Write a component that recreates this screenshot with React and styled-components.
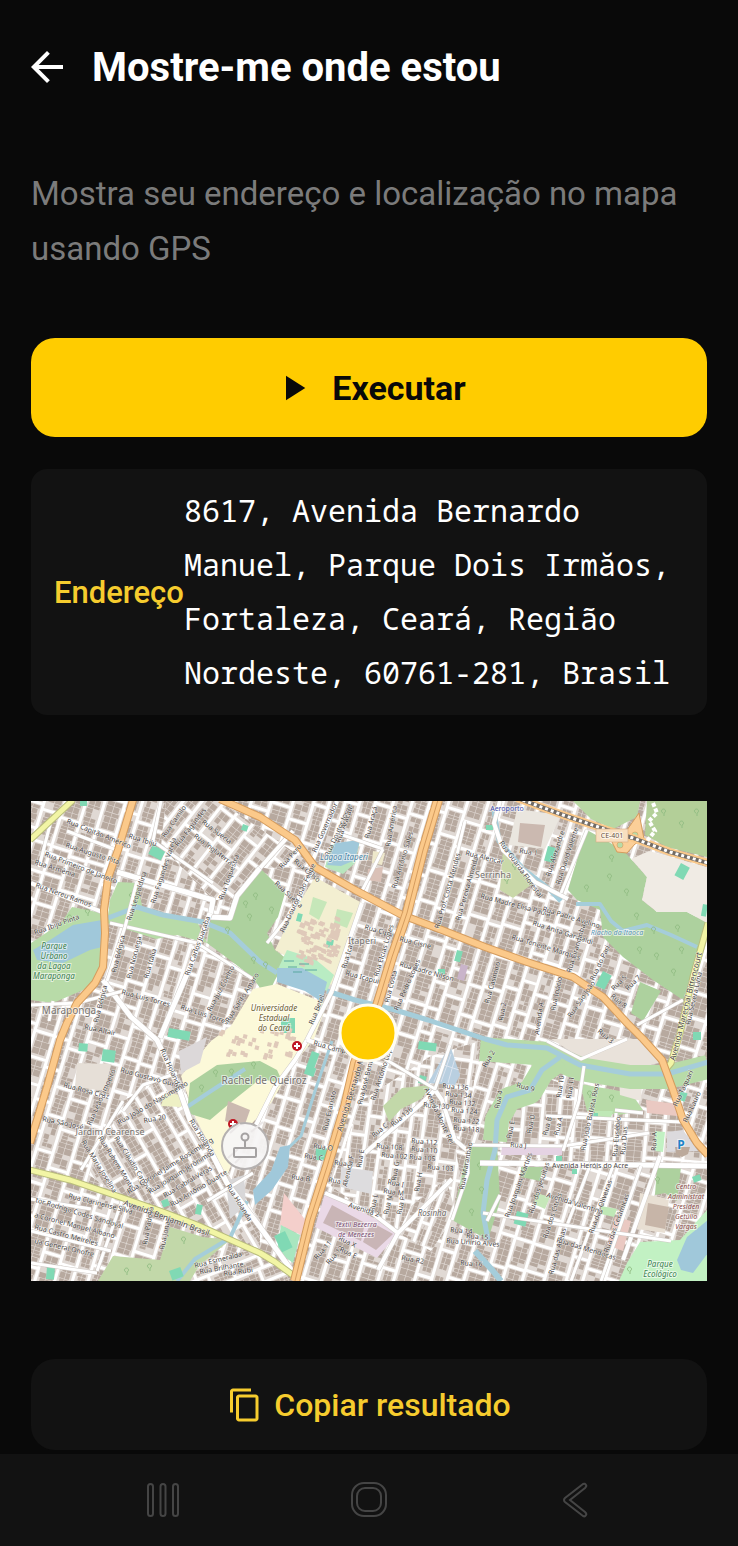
import styled, { createGlobalStyle } from 'styled-components';
import { MdArrowBack, MdContentCopy, MdPlayArrow } from 'react-icons/md';

const ADDRESS =
  '8617, Avenida Bernardo Manuel, Parque Dois Irmăos, Fortaleza, Ceará, Região Nordeste, 60761-281, Brasil';

export default function App() {
  return (
    <>
      <GlobalStyle />
      <Screen>
        <Header>
          <BackButton type="button" aria-label="Voltar">
            <MdArrowBack />
          </BackButton>
          <Title>Mostre-me onde estou</Title>
        </Header>

        <Content>
          <Description>Mostra seu endereço e localização no mapa usando GPS</Description>

          <RunButton type="button">
            <MdPlayArrow />
            Executar
          </RunButton>

          <ResultCard>
            <dt>Endereço</dt>
            <dd>{ADDRESS}</dd>
          </ResultCard>

          <MapFrame>
            <CityMap />
          </MapFrame>

          <CopyButton type="button">
            <MdContentCopy />
            Copiar resultado
          </CopyButton>
        </Content>

        <SystemBar>
          <SystemButton type="button" aria-label="Recentes">
            <svg width="36" height="36" viewBox="0 0 36 36">
              <rect x="3" y="2" width="5" height="32" rx="2.5" />
              <rect x="15.5" y="2" width="5" height="32" rx="2.5" />
              <rect x="28" y="2" width="5" height="32" rx="2.5" />
            </svg>
          </SystemButton>
          <SystemButton type="button" aria-label="Início">
            <svg width="36" height="36" viewBox="0 0 36 36">
              <rect x="1" y="1" width="34" height="33" rx="12" />
              <rect x="6" y="6" width="24" height="23" rx="8" />
            </svg>
          </SystemButton>
          <SystemButton type="button" aria-label="Voltar ao anterior">
            <svg width="36" height="36" viewBox="0 0 36 36">
              <path d="M26 2 L8 16 Q6 18 8 20 L26 34 Q28 35 29 33 Q30 32 28 30 L13 18 L28 6 Q30 4 29 3 Q28 1 26 2Z" />
            </svg>
          </SystemButton>
        </SystemBar>
      </Screen>
    </>
  );
}

function CityMap() {
  return (
    <MapSvg viewBox="0 0 676 480" role="img" aria-label="Mapa">
      <defs>
        {districts.map((district) => (
          <clipPath id={district.id} key={district.id}>
            <polygon points={district.area} />
          </clipPath>
        ))}
      </defs>

      <rect width="676" height="480" fill="#e3deda" />
      {districts.map((district) => (
        <District key={district.id} {...district} />
      ))}

      {landuse.map(([fill, points]) => (
        <polygon key={points} points={points} fill={fill} />
      ))}
      {riverBanks.map((d) => (
        <path key={d} d={d} fill="none" stroke="#b8dba8" strokeWidth="24" strokeLinejoin="round" />
      ))}
      {streams.map(([d, width]) => (
        <path key={d} d={d} fill="none" stroke="#a5cdda" strokeWidth={width} strokeLinejoin="round" />
      ))}
      {lakes.map((points) => (
        <polygon key={points} points={points} fill="#a0c8da" />
      ))}
      {pitches.map(([x, y, width, height, angle]) => (
        <rect
          key={`${x}-${y}`}
          x={x}
          y={y}
          width={width}
          height={height}
          fill="#80d9b4"
          transform={`rotate(${angle} ${x} ${y})`}
        />
      ))}
      <path d={trees} fill="none" stroke="#91bd83" strokeWidth="1" />
      <path d={campus} fill="#dfc9b9" />
      <path d="M253 160h10m5 3h10m-21 3h9m8 3h12m-24 2h9" stroke="#58a7a0" strokeWidth="1" />
      <path d="M416 250l-13 31m17-28l-10 28m14-24l-7 25m-10-20l21 7" stroke="#dbe4ef" strokeWidth="1" />

      {streets.map(([d, width]) => (
        <g key={d} fill="none" strokeLinejoin="round">
          <path d={d} stroke="#cfcac6" strokeWidth={width + 1} />
          <path d={d} stroke="#fff" strokeWidth={width} />
        </g>
      ))}
      {yellowRoads.map((d) => (
        <Road key={d} d={d} edge="#b9bd7c" fill="#f2f5a5" width="7" />
      ))}
      <polygon points="608,12 613,38 604,43 596,52 586,51 581,41 596,29" fill="#fbcf98" stroke="#d59c5e" />
      <circle cx="604" cy="34" r="3" fill="#b8dba8" stroke="#d59c5e" strokeWidth=".6" />
      <circle cx="589" cy="44" r="3" fill="#b8dba8" stroke="#d59c5e" strokeWidth=".6" />
      {orangeRoads.map(([d, width]) => (
        <Road key={d} d={d} edge="#d59c5e" fill="#fbc98a" width={width} />
      ))}
      <path d={centralAvenue} fill="none" stroke="#d59c5e" strokeWidth="1" />
      <g fill="none">
        <path d={railway} stroke="#fbc98a" strokeWidth="8" />
        <path d={railway} stroke="#716b66" strokeWidth="4" />
        <path d={railway} stroke="#fff" strokeWidth="3" strokeDasharray="3 3" />
      </g>
      <path d={runway} fill="none" stroke="#fff" strokeWidth="4" strokeDasharray="4 2" />

      {streetLabels.map(([text, x, y, angle, size = 7]) => (
        <StreetLabel key={`${text}-${x}-${y}`} fontSize={size} transform={`translate(${x} ${y}) rotate(${angle})`}>
          {text}
        </StreetLabel>
      ))}
      {placeLabels.map(({ lines, x, y, color, size, italic }) => (
        <PlaceLabel key={lines.join(' ')} fill={color} fontSize={size} $italic={italic}>
          {lines.map((line, index) => (
            <tspan key={line} x={x} y={y + index * 10}>
              {line}
            </tspan>
          ))}
        </PlaceLabel>
      ))}

      <rect x="565" y="28" width="32" height="13" fill="#f8dfbf" stroke="#d8ac83" strokeWidth=".6" />
      <PlaceLabel x="581" y="37" fill="#6b5342" fontSize="7">
        CE-401
      </PlaceLabel>
      <PlaceLabel x="650" y="348" fill="#1e84c9" fontSize="12" $bold>
        P
      </PlaceLabel>

      <Hospital x={266} y={245} />
      <Hospital x={202} y={323} />

      <circle cx="214" cy="345" r="23" fill="#f7f5f5" fillOpacity=".94" stroke="#b5b1b0" strokeWidth="2" />
      <g fill="none" stroke="#a5a2a2" strokeWidth="2">
        <path d="M197 357l10-9m-3 14l6-6m10-25l12-10m-33 11l10-9" stroke="#ebe8e8" />
        <circle cx="214" cy="336" r="3.5" />
        <path d="M214 340v7" />
        <rect x="203" y="347" width="22" height="9" rx="1" />
      </g>

      <circle cx="337" cy="232" r="28" fill="#ffcc00" stroke="#fffdf0" strokeWidth="3" />
    </MapSvg>
  );
}

function District({ id, blocks, houses }) {
  return (
    <g clipPath={`url(#${id})`}>
      <rect width="676" height="480" fill="#fff" />
      <path d={blocks} fill="#e0d9d4" />
      <path d={houses} fill="#b7a99f" />
    </g>
  );
}

function Road({ d, edge, fill, width }) {
  return (
    <g fill="none" strokeLinejoin="round">
      <path d={d} stroke={edge} strokeWidth={width} />
      <path d={d} stroke={fill} strokeWidth={width - 2} />
    </g>
  );
}

function Hospital({ x, y }) {
  return (
    <g>
      <circle cx={x} cy={y} r="5" fill="#bf1722" />
      <path d={`M${x - 3} ${y}h6M${x} ${y - 3}v6`} stroke="#fff" strokeWidth="2" />
    </g>
  );
}

function createRandom(seed) {
  let state = seed;
  return () => {
    state = (state * 16807) % 2147483647;
    return state / 2147483647;
  };
}

// Fills a rotated square around (cx, cy) with city blocks lined with houses
function createDistrict(id, area, { cx, cy, reach, angle, block, depth, seed }) {
  const random = createRandom(seed);
  const radians = (angle * Math.PI) / 180;
  const cos = Math.cos(radians);
  const sin = Math.sin(radians);
  const blocks = [];
  const houses = [];

  const quad = (u, v, w, h) =>
    'M' +
    [
      [u, v],
      [u + w, v],
      [u + w, v + h],
      [u, v + h],
    ]
      .map(([a, b]) => `${(cx + a * cos - b * sin).toFixed(1)} ${(cy + a * sin + b * cos).toFixed(1)}`)
      .join('L') +
    'Z';

  let u = -reach;
  while (u < reach) {
    const width = block + Math.round(random() * 7);
    let v = -reach - random() * 20;
    while (v < reach) {
      const height = depth + Math.round(random() * depth * 0.7);
      blocks.push(quad(u, v, width, height));
      const cell = (width - 1) / 2;
      let offset = 1;
      while (offset < height - 3) {
        const step = 3 + random() * 4;
        for (let side = 0; side < 2; side++) {
          if (random() > 0.1) {
            const inset = random() * 2;
            houses.push(
              quad(u + 1 + side * cell + (side ? 0 : inset), v + offset, cell - inset - 0.6, Math.min(step - 0.6, height - offset - 1))
            );
          }
        }
        offset += step;
      }
      v += height + 3;
    }
    u += width + 3;
  }

  return { id, area, blocks: blocks.join(''), houses: houses.join('') };
}

const districts = [
  createDistrict('city', '0,0 676,0 676,480 0,480', {
    cx: 338, cy: 240, reach: 430, angle: 17, block: 11, depth: 22, seed: 41,
  }),
  createDistrict('north', '135,0 189,0 284,66 229,67 206,99 182,99 130,45', {
    cx: 190, cy: 50, reach: 90, angle: 38, block: 11, depth: 24, seed: 7,
  }),
  createDistrict('jardim', '92,300 146,272 179,345 229,419 229,452 92,397 58,374', {
    cx: 140, cy: 360, reach: 120, angle: -30, block: 9, depth: 28, seed: 19,
  }),
  createDistrict('centre', '330,300 400,255 449,240 440,300 425,350 435,410 367,432 300,385', {
    cx: 370, cy: 340, reach: 110, angle: 8, block: 10, depth: 20, seed: 23,
  }),
  createDistrict('rosinha', '380,405 415,378 425,412 400,450 367,432', {
    cx: 398, cy: 415, reach: 45, angle: 20, block: 6, depth: 50, seed: 31,
  }),
  createDistrict('east', '472,300 512,276 606,309 645,312 677,362 520,360 452,345', {
    cx: 560, cy: 325, reach: 120, angle: 5, block: 12, depth: 26, seed: 55,
  }),
  createDistrict('south', '150,480 170,460 225,448 270,480', {
    cx: 210, cy: 465, reach: 70, angle: 68, block: 8, depth: 22, seed: 3,
  }),
];

const landuse = [
  ['#b8dba8', '41,106 71,112 71,166 59,186 22,202 0,199 0,142 30,122'],
  ['#b8dba8', '87,81 106,82 112,109 132,116 166,120 176,142 146,134 125,138 76,122 79,99'],
  ['#add19e', '229,67 254,92 247,116 236,132 244,149 256,158 244,179 236,196 221,176 199,159 176,142 180,117 199,117 206,95'],
  ['#fcf9d9', '222,188 246,183 296,203 283,238 262,264 240,302 212,332 196,375 179,345 165,318 150,275 180,240 200,225'],
  ['#f3efd1', '284,76 331,102 314,146 303,186 284,172 244,149 262,112'],
  ['#b9ecc3', '256,149 284,158 303,174 296,190 246,170'],
  ['#c6e7b9', '282,96 296,101 288,119 278,113'],
  ['#c6e7b9', '306,108 322,112 316,127 303,122'],
  ['#b8e5bd', '300,44 329,39 324,62 312,73 294,66'],
  ['#add19e', '159,282 186,264 229,260 246,269 252,282 229,278 199,302 179,319 156,312'],
  ['#add19e', '556,29 592,49 616,76 611,99 626,111 656,111 677,122 666,162 652,199 622,179 592,156 572,136 569,109 546,99 537,89 546,59'],
  ['#b8d7a3', '542,0 609,0 606,16 582,28 560,18'],
  ['#b3cf98', '616,0 676,0 676,56 636,46 614,34'],
  ['#f0ebe4', '600,58 618,50 676,66 676,122 656,111 626,111 611,99 616,76'],
  ['#eae6df', '486,8 530,14 514,48 478,44'],
  ['#c9d8a9', '472,49 504,81 482,97 469,89'],
  ['#c2d8a9', '67,480 82,455 129,459 139,426 172,436 199,439 168,465 159,480'],
  ['#d8d7d8', '195,380 213,374 215,404 199,418'],
  ['#dcd8d9', '148,250 176,236 169,262 150,272'],
  ['#e6dfd7', '46,262 80,263 74,290 44,286'],
  ['#eef0c5', '134,292 152,294 150,306 130,305'],
  ['#add19e', '437,346 466,342 469,400 457,439 421,419'],
  ['#b8dba8', '549,283 600,292 612,309 588,314 556,310'],
  ['#ece6df', '588,278 611,282 610,300 589,294'],
  ['#e9e2da', '520,238 612,238 628,262 592,270 552,258'],
  ['#c2d8a9', '352,305 371,287 401,284 390,298 370,308 358,321'],
  ['#dddcde', '310,366 342,370 340,393 310,386'],
  ['#ead9e7', '294,392 341,416 367,432 346,457 284,426'],
  ['#c9b5b6', '301,404 334,422 330,440 292,422'],
  ['#c9b5b6', '340,421 362,433 345,449 332,441'],
  ['#f4cfcb', '253,392 276,421 270,434 249,424'],
  ['#a9e6bf', '250,424 269,434 262,462 246,450'],
  ['#b9cfe0', '419,244 429,274 424,284 397,282'],
  ['#e5d3e3', '471,346 532,346 531,354 470,354'],
  ['#add19e', '490,366 512,366 509,380 490,376'],
  ['#add19e', '626,366 650,366 646,400 634,392 624,394'],
  ['#e8dfd3', '609,392 638,398 634,432 606,428'],
  ['#c7b5a8', '617,402 638,406 634,428 614,424'],
  ['#eac9c2', '584,416 600,420 592,450 576,444'],
  ['#eac9c2', '615,299 646,303 646,315 616,312'],
  ['#c2f1c3', '596,462 609,441 649,439 677,408 677,480 588,480'],
  ['#c2f1c3', '624,330 634,331 632,351 624,350'],
  ['#dcdadd', '636,331 652,329 667,350 636,351'],
  ['#bba99b', '644,346 659,346 657,353 651,356 645,353'],
  ['#bfe8b6', '564,310 582,310 580,317 563,317'],
  ['#c6e7b9', '505,392 519,396 514,408 503,403'],
  ['#bfe8b6', '570,405 586,408 583,416 570,413'],
  ['#add19e', '609,181 630,190 612,220 600,212'],
  ['#cbb9b0', '489,22 514,24 510,46 487,41'],
  ['#dac1b7', '337,68 352,66 350,81 336,79'],
  ['#eee8cb', '342,50 354,52 351,64 341,62'],
  ['#cbb9b0', '197,300 219,309 213,326 194,320'],
  ['#c9b4ca', '430,163 437,165 433,180 426,178'],
];

const lakes = [
  '71,119 42,124 19,139 2,149 6,159 32,162 59,149 71,146',
  '246,167 271,167 296,181 291,201 274,190 246,181',
  '304,42 329,39 324,59 310,65 296,64',
  '249,346 259,344 257,366 241,389 224,404 222,389 240,370',
  '677,419 656,436 646,459 650,469 662,472 677,452',
];

const riverBanks = [
  'M449 248 L476 250 516 253 549 268 599 276 636 276 677 266',
  'M529 258 L511 271 499 291 478 298 466 319 464 340',
];

const streams = [
  ['M77 117 L106 106 132 114 172 121 199 132 229 161 246 172', 5],
  ['M296 190 L324 199 364 209 397 219 454 238 476 244 516 247 549 264 599 273 636 273 677 261', 5],
  ['M529 256 L511 269 499 289 476 296 466 319 464 349 456 379 452 412 457 439', 5],
  ['M146 480 L164 458 199 437 216 400', 4],
  ['M301 240 L284 290 270 335 256 348', 3],
  ['M156 306 L180 290 214 268', 4],
  ['M545 103 L569 103 580 120 592 130 616 124 640 134 666 146', 4],
  ['M444 450 L462 470 470 480', 6],
  ['M463 10 L468 40 492 68 518 88 530 100', 5],
];

// x, y, width, height, angle
const pitches = [
  [122, 44, 14, 10, 28], [49, 0, 7, 5, 0], [212, 23, 6, 6, 20],
  [48, 242, 9, 8, 5], [72, 248, 13, 12, 8], [130, 400, 7, 7, -20],
  [166, 403, 6, 10, 12], [16, 466, 8, 12, 5], [138, 470, 12, 10, -20],
  [250, 217, 14, 15, 0], [281, 250, 8, 16, 20], [276, 264, 10, 9, 20],
  [285, 347, 11, 12, 3], [254, 430, 18, 12, 65], [388, 240, 18, 8, 8],
  [389, 274, 7, 8, 15], [517, 45, 9, 15, 15], [455, 24, 7, 5, 0],
  [650, 62, 10, 14, 28], [672, 103, 5, 12, 10], [572, 170, 10, 16, 28],
  [426, 149, 6, 11, 15], [407, 168, 7, 5, 0], [486, 410, 12, 13, 15],
  [525, 355, 6, 9, 0], [541, 368, 5, 5, 0], [650, 290, 7, 9, 20],
  [661, 376, 8, 6, -20], [138, 227, 22, 9, 10], [562, 312, 5, 5, 0],
  [662, 231, 8, 8, 0], [296, 138, 7, 8, 10], [267, 112, 5, 8, 15],
];

const trees = [
  [580, 58], [555, 88], [578, 77], [595, 92], [605, 116], [622, 130], [646, 128], [608, 150],
  [625, 156], [650, 150], [642, 172], [224, 96], [218, 117], [196, 130], [222, 160], [234, 165],
  [214, 104], [240, 110], [170, 288], [184, 273], [200, 272], [222, 265], [118, 467], [95, 471],
  [152, 440], [448, 366], [450, 390], [440, 412], [632, 12], [650, 24], [665, 12], [558, 294],
  [580, 298], [475, 80], [483, 66], [598, 470], [38, 118], [56, 112], [100, 96], [626, 380],
]
  .map(([x, y]) => `M${x} ${y}a2 2 0 1 1 1 0v3`)
  .join('');

// Scattered university buildings
const campus = (() => {
  const random = createRandom(97);
  const parts = [];
  for (let i = 0; i < 90; i++) {
    const x = 266 + random() * 40;
    const y = 118 + random() * 46 - (x - 266) * 0.1;
    parts.push(`M${x.toFixed(1)} ${y.toFixed(1)}l5 2-1 3-5-2z`);
  }
  for (let i = 0; i < 36; i++) {
    const x = 186 + random() * 76;
    const y = 226 + random() * 28;
    parts.push(`M${x.toFixed(1)} ${y.toFixed(1)}l4 1-1 4-4-1z`);
  }
  return parts.join('');
})();

const streets = [
  ['M86 71 L182 99 179 116 199 117 206 95 229 67', 5],
  ['M179 112 L159 166 142 206 129 237', 5],
  ['M12 50 L77 77', 4],
  ['M0 82 L71 111', 4],
  ['M20 20 L8 66 M36 30 L88 50', 3],
  ['M79 122 L166 142 222 178', 3],
  ['M72 179 L100 216 126 239 146 282 159 319 179 349 196 382 229 426 264 474', 5],
  ['M106 80 L94 126 76 180', 3],
  ['M0 204 L46 202 92 190 M22 200 L18 220', 3],
  ['M130 0 L122 40 182 82', 3],
  ['M229 67 L262 30 M279 66 L306 0', 4],
  ['M284 66 L254 120 236 142', 3],
  ['M276 239 L264 259 244 286 224 326', 4],
  ['M276 239 L307 249 M301 190 L276 239 M331 102 L301 190', 4],
  ['M306 32 L352 48 M352 48 L330 92', 3],
  ['M294 392 L341 412 367 432 347 469 M367 432 L421 378', 4],
  ['M334 352 L391 302 404 289 411 299 424 339 437 350', 4],
  ['M354 258 L404 288 419 244', 3],
  ['M437 346 L437 372 421 419', 3],
  ['M449 362 L676 365', 5],
  ['M440 344 L532 345 618 332', 3],
  ['M629 355 L592 459', 4],
  ['M560 362 L530 440 M582 365 L540 480 M610 365 L570 480', 3],
  ['M515 315 L651 321 M584 309 L612 312 M585 312 L583 360', 3],
  ['M553 265 L548 300 532 350', 3],
  ['M452 412 L640 440', 3],
  ['M469 394 L456 420', 3],
  ['M92 300 L50 369 M92 340 L110 380', 3],
  ['M92 397 L66 470 M96 400 L72 390', 3],
  ['M146 272 L112 284 92 310', 3],
  ['M222 372 L176 400', 3],
  ['M469 0 L463 22 472 49 504 81 537 98', 4],
  ['M556 29 L530 92', 3],
  ['M596 238 L550 258 516 240', 3],
  ['M652 199 L606 224', 3],
  ['M0 398 L60 408 M0 430 L80 450 M0 462 L66 472', 3],
  ['M412 112 L434 20', 3],
];

const yellowRoads = [
  'M-1 369 L39 379 92 397 132 411 166 424 229 452 244 461 263 475',
  'M42 -1 L-1 39',
  'M677 122 L662 176 649 232 640 262 635 268',
];

const centralAvenue = 'M407 -1 L392 49 376 112 361 156 347 202 324 262 314 306 296 366 279 419 264 480';

const orangeRoads = [
  ['M102 -1 L87 49 77 77 73 109 74 132 72 166 64 182 46 202 36 222 29 239 16 286 -1 342', 8],
  ['M189 -2 L229 16 264 39 284 66 324 89 371 114 411 129 454 146 496 161 542 176 572 196 596 222 612 238 631 259 642 289 652 319 666 342 677 354', 8],
  [centralAvenue, 10],
];

const railway = 'M486 -3 L532 14 576 29 602 37 639 51 677 62';
const runway = 'M622 2 L626 12 618 20 624 30 616 40';

// text, x, y, angle, size
const streetLabels = [
  ['Rua Primeiro de Janeiro', 13, 55, 21], ['Rua Capitão Américo', 35, 22, 22],
  ['Rua Augusto Pita', 34, 46, 18], ['Rua Armênia', 3, 63, 18],
  ['Rua Nereu Ramos', 4, 86, 20], ['Rua Ibijú', 97, 37, 17],
  ['Rua Fagundes Varela', 124, 103, -72], ['Rua Camilo', 134, 37, -55],
  ['Rua Fagundes', 147, 46, -52], ['Rua Suécia', 170, 22, 37],
  ['Rua Inglaterra', 162, 36, 37], ['Rua Leopoldina', 100, 120, -72],
  ['Rua Toquestra', 192, 99, -70], ['Rua Carlos Juaçaba', 158, 175, -70],
  ['Rua Bélgica', 85, 172, -76], ['Rua Noruega', 100, 178, -76],
  ['Rua Itália', 117, 178, -74], ['Rua Luis Torres', 90, 193, 15],
  ['Rua Luis Torres', 149, 208, 18], ['Rua Santo Amaro', 198, 222, -58],
  ['Rua Juiz Coelho', 180, 211, -62], ['Rua Bélgica', 67, 222, -76],
  ['Rua Ibijú Pinta', 4, 134, -20], ['Rua Altair', 53, 228, 12],
  ['Rua Rosa Cruz', 32, 286, 15], ['Rua São José', 11, 320, 12],
  ['Rua Gustavo Gurgel', 89, 271, 15], ['Rua Holanda', 129, 249, 66],
  ['Rua Leão Limoeiro', 60, 325, -66], ['Rua Holanda', 158, 320, 58],
  ['Rua Holanda', 195, 385, 58], ['Rua 20', 113, 322, -10],
  ['Rua João do Nascimento', 88, 324, -30], ['Rua Cláudio Canova', 83, 337, 58],
  ['Rua Rubem Monte', 67, 337, 58], ['Rua Maria Joselina', 50, 341, 58],
  ['Rua Coronel Jaime Rosemberg', 98, 393, -32], ['Rua Joaquim Jerônimo', 119, 393, -32],
  ['Rua Cabral Veras', 134, 397, -31], ['Rua Antônio Duarte', 141, 406, -31],
  ['Rua Clarinense Silva', 37, 397, 14], ['tor Rodrigo Codes Sandoval', 4, 401, 17],
  ['a Coronel Manuel Albano', 3, 416, 15], ['Rua Castro Meireles', 3, 428, 15],
  ['ua General Onofre', 3, 442, 13], ['Rua Padova', 116, 444, -80],
  ['Rua Jonas', 133, 449, -78], ['Rua Esmeralda', 164, 467, -14],
  ['Rua Brilhante', 169, 473, -10], ['Rua Rubi', 193, 475, -8],
  ['Avenida Benjamin Brasil', 92, 404, 20, 8],
  ['Rua Governador', 285, 52, -66], ['Rua Doutor Jorge', 298, 56, -66],
  ['Rua Aracati', 309, 42, -70], ['Rua Araçá', 338, 38, -75],
  ['Rua Antônio Sales', 365, 88, -73], ['Rua América', 359, 46, -80],
  ['Rua Peru', 251, 68, -48], ['Rua Celso', 262, 61, 40],
  ['Rua Suécia', 243, 83, 43], ['Rua Doutor João Felipe', 253, 132, -65],
  ['Rua Cipó', 333, 128, 16], ['Rua Cisne', 368, 140, 14],
  ['Rua Icaraí', 315, 168, -74], ['Rua Icapuí', 314, 174, 15],
  ['Rua Elcias Lopes', 347, 176, -73], ['Rua Padre Nilson', 368, 165, 16],
  ['Rua Pedro Lopes', 367, 210, -66], ['Rua Costa', 358, 202, -76],
  ['Rua Prof. Costa Mendes', 408, 128, -74], ['Rua Pereira Almeida', 429, 120, -74],
  ['Rua Alencar', 434, 54, 14], ['Rua Betel', 282, 224, -68],
  ['Rua 1', 488, 52, 8], ['Rua Guarda Florestal', 468, 42, 54],
  ['Rua Alexandre', 519, 76, -72], ['Rua David Valente', 529, 84, -72],
  ['Rua Madre Elisa Paula', 449, 97, 15], ['Rua Padre Avelino', 511, 110, 17],
  ['Rua Anita Garibaldi', 501, 124, 18], ['Rua Tenente Marques', 480, 138, 17],
  ['Rua Cirandinha', 540, 172, -73], ['Rua do Pari', 563, 180, -65],
  ['Rua Casimiro', 458, 203, -75], ['Rua Inácio', 524, 210, -78],
  ['Rua São João', 540, 217, -55], ['Avenida A', 508, 234, -82],
  ['Rua 2', 472, 220, -80], ['Rua 3', 566, 231, 40],
  ['Rua 5', 583, 190, -45], ['Rua 7', 597, 190, -45], ['Rua 8', 579, 196, 38],
  ['Avenida Marechal Bittencourt', 644, 260, -76, 8], ['Rua Severa Lima', 659, 224, -77],
  ['Avenida Bernardo Manuel', 311, 331, -73, 8], ['Rua Campo', 282, 244, 15],
  ['Rua Evaristo', 296, 330, -77], ['Rua O', 282, 347, 8], ['Rua C', 273, 357, 8],
  ['Rua B', 260, 378, 8], ['Rua A', 303, 364, 5], ['Rua D', 297, 381, 10],
  ['Rua José Bento', 331, 304, -76], ['Rua Antônio Lopes', 344, 300, -72],
  ['Rua C', 343, 337, -40], ['Rua 136', 362, 326, -40], ['Avenida Monte Rei', 393, 288, 65],
  ['Rua 136', 411, 287, 5], ['Rua 134', 414, 295, 5], ['Rua 132', 418, 303, 5],
  ['Rua 124', 420, 311, 5], ['Rua 122', 422, 321, 5], ['Rua 118', 422, 329, 5],
  ['Rua 130', 392, 306, 5], ['Rua 112', 380, 342, 5], ['Rua 108', 345, 347, 5],
  ['Rua 110', 380, 350, 5], ['Rua 105', 378, 358, 5], ['Rua 102', 350, 356, 5],
  ['Rua 103', 396, 368, 5], ['Avenida F', 316, 386, -77], ['Rua I', 356, 383, 12],
  ['Rua M', 352, 392, 8], ['Rua E', 330, 367, -80], ['Rua G', 365, 380, -80],
  ['Rua H', 388, 391, -80], ['Rua L', 343, 411, -77], ['Rua N', 357, 414, -77],
  ['Rua P', 370, 414, -77], ['Avenida 2', 317, 406, 18], ['Rua 14', 419, 431, 5],
  ['Rua 15', 435, 437, 5], ['Rua Unirio Alves', 415, 442, 4], ['Rua 16', 429, 464, 5],
  ['Rua Maranhão', 433, 389, -80], ['Rua R2', 370, 459, 10], ['Rua 11', 286, 459, -48],
  ['Rua 12', 298, 464, -48], ['Rua X', 307, 439, 25], ['Rua E', 308, 450, 25],
  ['Rua J', 479, 346, 4], ['Rua E', 480, 338, -78], ['Rua D', 500, 333, -78],
  ['Rua A', 527, 335, -75], ['Rua B', 516, 335, -75], ['Rua 9', 485, 286, 15],
  ['Rua João Batista Rios', 554, 350, -78], ['Rua Eusébio', 586, 356, -85],
  ['Rua Dias', 594, 354, -85], ['Rua 10', 530, 297, -82], ['Rua 11', 540, 298, -82],
  ['Avenida Heróis do Acre', 521, 367, 0], ['Rua Joaquim Martins', 478, 417, -70],
  ['Rua dos Jesuítas', 502, 413, -72], ['Rua dos Citrus', 516, 438, -72],
  ['Rua das Oliveiras', 562, 433, -70], ['Rua das Cerâmicas', 577, 452, -70],
  ['Avenida Valentina', 515, 396, 17], ['Rua das Mendocas', 525, 441, 17],
  ['Rua das Areias', 522, 474, -74], ['Rua A', 625, 350, -88], ['Rua Lauro', 656, 322, -65],
  ['Rua Taquari', 646, 306, -65], ['Rua 4', 468, 308, -78], ['Rua 2', 455, 267, -60],
];

const placeLabels = [
  { lines: ['Maraponga'], x: 38, y: 213, color: '#77736f', size: 10 },
  { lines: ['Serrinha'], x: 462, y: 77, color: '#77736f', size: 9 },
  { lines: ['Itaperi'], x: 331, y: 143, color: '#77736f', size: 9 },
  { lines: ['Rachel de Queiroz'], x: 233, y: 283, color: '#77736f', size: 10 },
  { lines: ['Jardim Cearense'], x: 79, y: 334, color: '#77736f', size: 9 },
  { lines: ['Parque', 'Urbano', 'da Lagoa', 'Maraponga'], x: 23, y: 148, color: '#3b8150', size: 8, italic: true },
  { lines: ['Universidade', 'Estadual', 'do Ceará'], x: 243, y: 210, color: '#6d6033', size: 8, italic: true },
  { lines: ['Lagoa Itaperi'], x: 313, y: 59, color: '#4e86a6', size: 8, italic: true },
  { lines: ['Têxtil Bezerra', 'de Menezes'], x: 325, y: 426, color: '#7b5176', size: 7, italic: true },
  { lines: ['Rosinha'], x: 401, y: 415, color: '#6e6a68', size: 8, italic: true },
  { lines: ['Aeroporto'], x: 476, y: 10, color: '#424eae', size: 7 },
  { lines: ['Centro', 'Administrat', 'Presiden', 'Getúlio', 'Vargas'], x: 655, y: 388, color: '#8c4f4b', size: 7, italic: true },
  { lines: ['Parque', 'Ecológico'], x: 629, y: 466, color: '#3b8150', size: 8, italic: true },
  { lines: ['Riacho da Itaoca'], x: 586, y: 134, color: '#5a94b5', size: 7, italic: true },
];

const GlobalStyle = createGlobalStyle`
  * {
    box-sizing: border-box;
  }

  body {
    margin: 0;
    background-color: #090909;
    font-family: Roboto, sans-serif;
    color: #ffffff;
  }

  button {
    padding: 0;
    border: none;
    background: none;
    font-family: inherit;
    color: inherit;
    cursor: pointer;
  }
`;

const Screen = styled.div`
  display: flex;
  flex-direction: column;
  min-height: 100vh;
`;

const Header = styled.header`
  display: flex;
  align-items: center;
  gap: 21px;
  height: 134px;
  padding: 0 23px;
`;

const BackButton = styled.button`
  display: flex;
  font-size: 48px;
`;

const Title = styled.h1`
  margin: 0;
  font-size: 40px;
  font-weight: 700;
`;

const Content = styled.main`
  display: flex;
  flex-direction: column;
  padding: 32px 31px 4px;
`;

const Description = styled.p`
  margin: 0 0 62px;
  font-size: 33px;
  line-height: 55px;
  color: #7b7b7b;
`;

const ActionButton = styled.button`
  display: flex;
  justify-content: center;
  align-items: center;
  width: 100%;
  border-radius: 24px;
`;

const RunButton = styled(ActionButton)`
  gap: 18px;
  height: 99px;
  background-color: #ffcc00;
  font-size: 34px;
  font-weight: 700;
  color: #090909;

  svg {
    font-size: 42px;
  }
`;

const ResultCard = styled.dl`
  display: flex;
  align-items: center;
  margin: 32px 0 86px;
  padding: 15px 23px;
  background-color: #121212;
  border-radius: 16px;

  dt {
    font-size: 31px;
    font-weight: 500;
    color: #f6cc2e;
  }

  dd {
    flex: 1;
    margin: 0;
    font-family: 'Noto Sans Mono', 'DejaVu Sans Mono', monospace;
    font-size: 30px;
    line-height: 54px;
  }
`;

const MapFrame = styled.section`
  margin-bottom: 78px;
  overflow: hidden;
`;

const MapSvg = styled.svg`
  display: block;
  width: 100%;
  height: auto;
  font-family: 'Noto Sans', sans-serif;
`;

const StreetLabel = styled.text`
  fill: #4c4846;
  stroke: #ffffff;
  stroke-width: 1px;
  stroke-opacity: 0.6;
  paint-order: stroke;
`;

const PlaceLabel = styled.text`
  text-anchor: middle;
  font-style: ${(props) => (props.$italic ? 'italic' : 'normal')};
  font-weight: ${(props) => (props.$bold ? 700 : 400)};
  stroke: #ffffff;
  stroke-width: 2px;
  stroke-opacity: 0.6;
  paint-order: stroke;
`;

const CopyButton = styled(ActionButton)`
  gap: 11px;
  height: 91px;
  background-color: #121212;
  font-size: 32px;
  font-weight: 500;
  color: #f6cc2e;

  svg {
    font-size: 36px;
  }
`;

const SystemBar = styled.nav`
  display: grid;
  grid-template-columns: repeat(3, 1fr);
  height: 92px;
  margin-top: auto;
  padding: 0 60px;
  background-color: #121212;
`;

const SystemButton = styled.button`
  display: flex;
  justify-content: center;
  align-items: center;

  svg {
    fill: none;
    stroke: #454545;
    stroke-width: 2px;
  }
`;
